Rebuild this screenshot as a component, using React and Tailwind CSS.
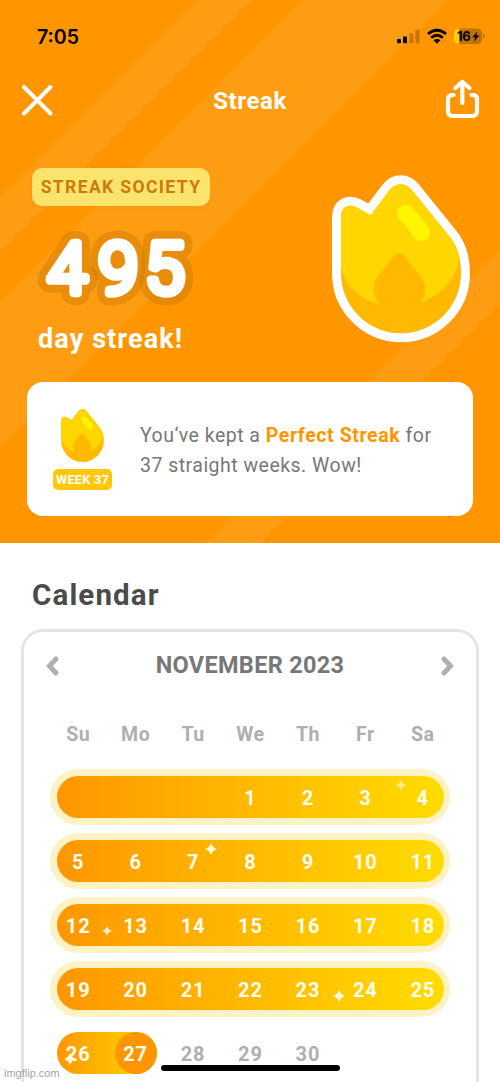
import React from "react";

const WEEKDAYS = ["Su", "Mo", "Tu", "We", "Th", "Fr", "Sa"];
const WEEKS = [
  ["", "", "", 1, 2, 3, 4],
  [5, 6, 7, 8, 9, 10, 11],
  [12, 13, 14, 15, 16, 17, 18],
  [19, 20, 21, 22, 23, 24, 25],
];
const STREAK_DIGITS = [
  { d: "4", x: 47.5 },
  { d: "9", x: 98.5 },
  { d: "5", x: 145 },
];

function FlameShape() {
  return (
    <>
      <path
        d="M123 370V203C123 168 147 161 172 173L212 196L266 124C286 96 316 96 337 122L448 259C472 289 483 327 483 370A180 180 0 0 1 123 370Z"
        fill="#ffb900"
      />
      <path
        d="M123 355V203C123 168 147 161 172 173L212 196L266 124C286 96 316 96 337 122L448 259C465 281 474 302 478 322C468 386 424 438 360 458C384 430 378 399 362 380L312 318C303 307 291 307 282 318L236 376C214 402 218 440 241 463C180 449 138 408 123 355Z"
        fill="#ffd600"
      />
      <path d="M317 190Q344 215 364 248" stroke="#fff500" strokeWidth="52" strokeLinecap="round" fill="none" />
    </>
  );
}

function Sparkle({ className }) {
  return (
    <svg viewBox="0 0 12 12" className={className} fill="#fffbe0">
      <path d="M6 0.8Q7.2 4.8 11.2 6Q7.2 7.2 6 11.2Q4.8 7.2 0.8 6Q4.8 4.8 6 0.8Z" stroke="#fffbe0" strokeWidth="0.8" strokeLinejoin="round" />
    </svg>
  );
}

function StatusBar() {
  return (
    <div className="flex h-[74px] items-center justify-between pl-[37px] pr-[14px]">
      <span className="pt-[2px] font-['Inter',sans-serif] text-[19.500px] font-semibold leading-none text-black">7:05</span>
      <svg width="90" height="20" viewBox="396 27 90 20">
        <rect x="397" y="39" width="4" height="4.300" rx="1" />
        <rect x="403" y="36.500" width="4" height="6.800" rx="1" />
        <rect x="409.300" y="33" width="4" height="10.300" rx="1" opacity=".22" />
        <rect x="415.500" y="29.500" width="4" height="13.800" rx="1" opacity=".22" />
        <g fill="none" stroke="#000" strokeWidth="2.800">
          <path d="M428 34Q437 26.500 446 34" />
          <path d="M431.200 37.800Q437 32.800 442.800 37.800" />
        </g>
        <path d="M433.500 40.300Q437 37.500 440.500 40.300L437 43.800Z" />
        <rect x="454" y="28.500" width="28" height="15.500" rx="4.500" opacity=".24" />
        <path d="M459 28.500H458.500A4.500 4.500 0 0 0 454 33V39.500A4.500 4.500 0 0 0 458.500 44H459Z" fill="#ffd000" />
        <path d="M483 33.500Q486 36.200 483 39Z" opacity=".3" />
        <text x="457" y="41" fontFamily="Inter, sans-serif" fontSize="13" fontWeight="700" letterSpacing="-.3">16</text>
        <path d="M477.200 31.500L472.300 37.200H475.200L473.800 41.700L479.600 35.600H476.500Z" />
      </svg>
    </div>
  );
}

export default function App() {
  return (
    <div className="relative flex h-[1082px] w-[500px] flex-col overflow-hidden bg-white font-['Roboto',sans-serif]">
      <header className="relative h-[543px] shrink-0 bg-[#ff9600]">
        <svg className="absolute inset-0" width="500" height="543" viewBox="0 0 500 543" fill="#ff9d12">
          <path d="M198 0H252L0 252V198ZM303 0H448L0 448V303ZM500 249V304L261 543H206Z" />
        </svg>
        <div className="relative">
          <StatusBar />
          <div className="flex h-[52px] items-center justify-between px-5">
            <svg width="34" height="34" viewBox="0 0 34 34" fill="none" stroke="#fff" strokeWidth="4" strokeLinecap="round">
              <path d="M4 4L30.500 30.500M30.500 4L4 30.500" />
            </svg>
            <h1 className="pl-[2px] pt-[2px] text-[24px] font-bold leading-none tracking-[0.600px] text-white">Streak</h1>
            <svg width="36" height="42" viewBox="444 79 36 42" fill="none" stroke="#fff" strokeWidth="4.200" strokeLinecap="round" strokeLinejoin="round">
              <path d="M453.500 95H452Q448 95 448 99V111Q448 116 453 116H472Q477 116 477 111V99Q477 95 473 95H471.500M462.300 103V82M455.300 88L462.300 81.800L469.300 88" />
            </svg>
          </div>
          <div className="flex h-[256px] justify-between pl-8 pr-[26px] pt-[42px]">
            <div className="flex flex-col items-start">
              <div className="flex h-[38px] w-[178px] items-center justify-center rounded-[10px] bg-[#fbe36d] pt-[1px] text-[17.500px] font-bold tracking-[1.400px] text-[#c87d0a] shadow-[0_0_4px_rgba(225,150,0,0.5)]">
                STREAK SOCIETY
              </div>
              <svg width="180" height="104" viewBox="32 216 180 104" className="mt-2.5" fontFamily="Roboto, sans-serif" fontSize="71" fontWeight="300" strokeLinejoin="round">
                <g fill="#c87800" stroke="#c87800" strokeWidth="24">
                  {STREAK_DIGITS.map(({ d, x }) => <text key={d} x={x} y="292.500" opacity=".42">{d}</text>)}
                </g>
                <g fill="#fff" stroke="#fff" strokeWidth="8.500">
                  {STREAK_DIGITS.map(({ d, x }) => <text key={d} x={x} y="292.500">{d}</text>)}
                </g>
              </svg>
              <p className="ml-1.5 mt-[3px] whitespace-nowrap text-[27px] font-bold leading-8 tracking-[1.100px] text-white">day streak!</p>
            </div>
            <svg width="146" height="176" viewBox="84 60 438 528" className="mt-0.5 shrink-0">
              <path
                d="M123 370V203C123 168 147 161 172 173L212 196L266 124C286 96 316 96 337 122L448 259C472 289 483 327 483 370A180 180 0 0 1 123 370Z"
                fill="#fff"
                stroke="#fff"
                strokeWidth="54"
              />
              <FlameShape />
            </svg>
          </div>
          <div className="mx-[27px] flex h-[134px] items-center rounded-[16px] bg-white pl-[26px]">
            <div className="flex w-[59px] flex-col items-center gap-[7px]">
              <svg width="43" height="53" viewBox="123 102 360 448"><FlameShape /></svg>
              <div className="flex h-[21px] w-[59px] items-center justify-center rounded-[5px] bg-[#ffc80a] pt-[1px] text-[12.800px] font-bold tracking-[0.200px] text-white">
                WEEK 37
              </div>
            </div>
            <p className="ml-7 whitespace-nowrap pt-[3px] text-[19.500px] leading-[30px] tracking-[0.480px] text-[#777777]">
              You‘ve kept a <b className="font-bold tracking-[0.600px] text-[#ff9600]">Perfect Streak</b> for
              <br />
              37 straight weeks. Wow!
            </p>
          </div>
        </div>
      </header>

      <h2 className="ml-8 mt-8 text-[29.500px] font-bold leading-10 tracking-[1.150px] text-[#4b4b4b]">Calendar</h2>
      <section className="mx-[21px] mt-3.5 h-[500px] shrink-0 rounded-[22px] border-[3px] border-[#e5e5e5]">
        <div className="flex h-[67px] items-center justify-between px-5">
          <svg width="18" height="22" viewBox="0 0 18 22" fill="none" stroke="#afafaf" strokeWidth="5" strokeLinecap="round">
            <path d="M12 4L5.500 11L12 18" />
          </svg>
          <h3 className="pt-px text-[23.500px] font-bold tracking-[0.300px] text-[#777777]">NOVEMBER 2023</h3>
          <svg width="18" height="22" viewBox="0 0 18 22" fill="none" stroke="#afafaf" strokeWidth="5" strokeLinecap="round">
            <path d="M6 4L12.500 11L6 18" />
          </svg>
        </div>
        <div className="ml-[25.500px] mr-[24.500px] grid h-[70px] grid-cols-7 items-center pt-px text-center text-[19.500px] font-bold tracking-[0.500px] text-[#afafaf]">
          {WEEKDAYS.map((d) => <span key={d}>{d}</span>)}
        </div>
        <div className="mx-[26px] flex flex-col gap-2">
          {WEEKS.map((week, i) => (
            <div key={i} className="relative rounded-full bg-[#fcf2c4] px-[6.500px] py-[6.800px]">
              <div className="h-[42.400px] rounded-full bg-linear-to-r from-[#ff9600] to-[#ffdc00]">
                <div className="-ml-[7px] -mr-[8px] grid h-full grid-cols-7 items-center pt-[2px] text-center text-[20px] font-bold tracking-[0.900px] text-[#fffdf0]">
                  {week.map((d, j) => <span key={j}>{d}</span>)}
                </div>
              </div>
              {i === 0 && <Sparkle className="absolute left-[346px] top-[11px] size-[10px] opacity-70" />}
              {i === 1 && <Sparkle className="absolute left-[155px] top-[10.500px] size-[12px]" />}
              {i === 2 && <Sparkle className="absolute left-[52px] top-[29px] size-[10px] opacity-85" />}
              {i === 3 && <Sparkle className="absolute left-[283px] top-[29px] size-[12px]" />}
            </div>
          ))}
        </div>
        <div className="relative mx-[32.500px] mt-[14.800px] h-[42.400px]">
          <div className="absolute left-0 h-full w-[100.500px] rounded-full bg-linear-to-r from-[#ff9600] via-[#ffc000] via-60% to-[#ffd000]" />
          <div className="absolute left-[58px] size-[42.400px] rounded-full bg-[#ff9600]" />
          <div className="relative -ml-[7px] -mr-[8px] grid h-full grid-cols-7 items-center pt-[2px] text-center text-[20px] font-bold tracking-[0.900px] text-[#afafaf]">
            {[26, 27, 28, 29, 30].map((d) => (
              <span key={d} className={d < 28 ? "text-[#fffdf0]" : ""}>{d}</span>
            ))}
          </div>
          <Sparkle className="absolute left-[7px] top-[21px] size-[12px]" />
        </div>
      </section>
      <div className="absolute bottom-[11px] left-[161px] h-[6px] w-[178.500px] rounded-full bg-black" />
      <span className="absolute bottom-[2px] left-1 font-['Liberation_Sans',sans-serif] text-[11px] leading-[13px] text-[#a3a3a3]">imgflip.com</span>
    </div>
  );
}
